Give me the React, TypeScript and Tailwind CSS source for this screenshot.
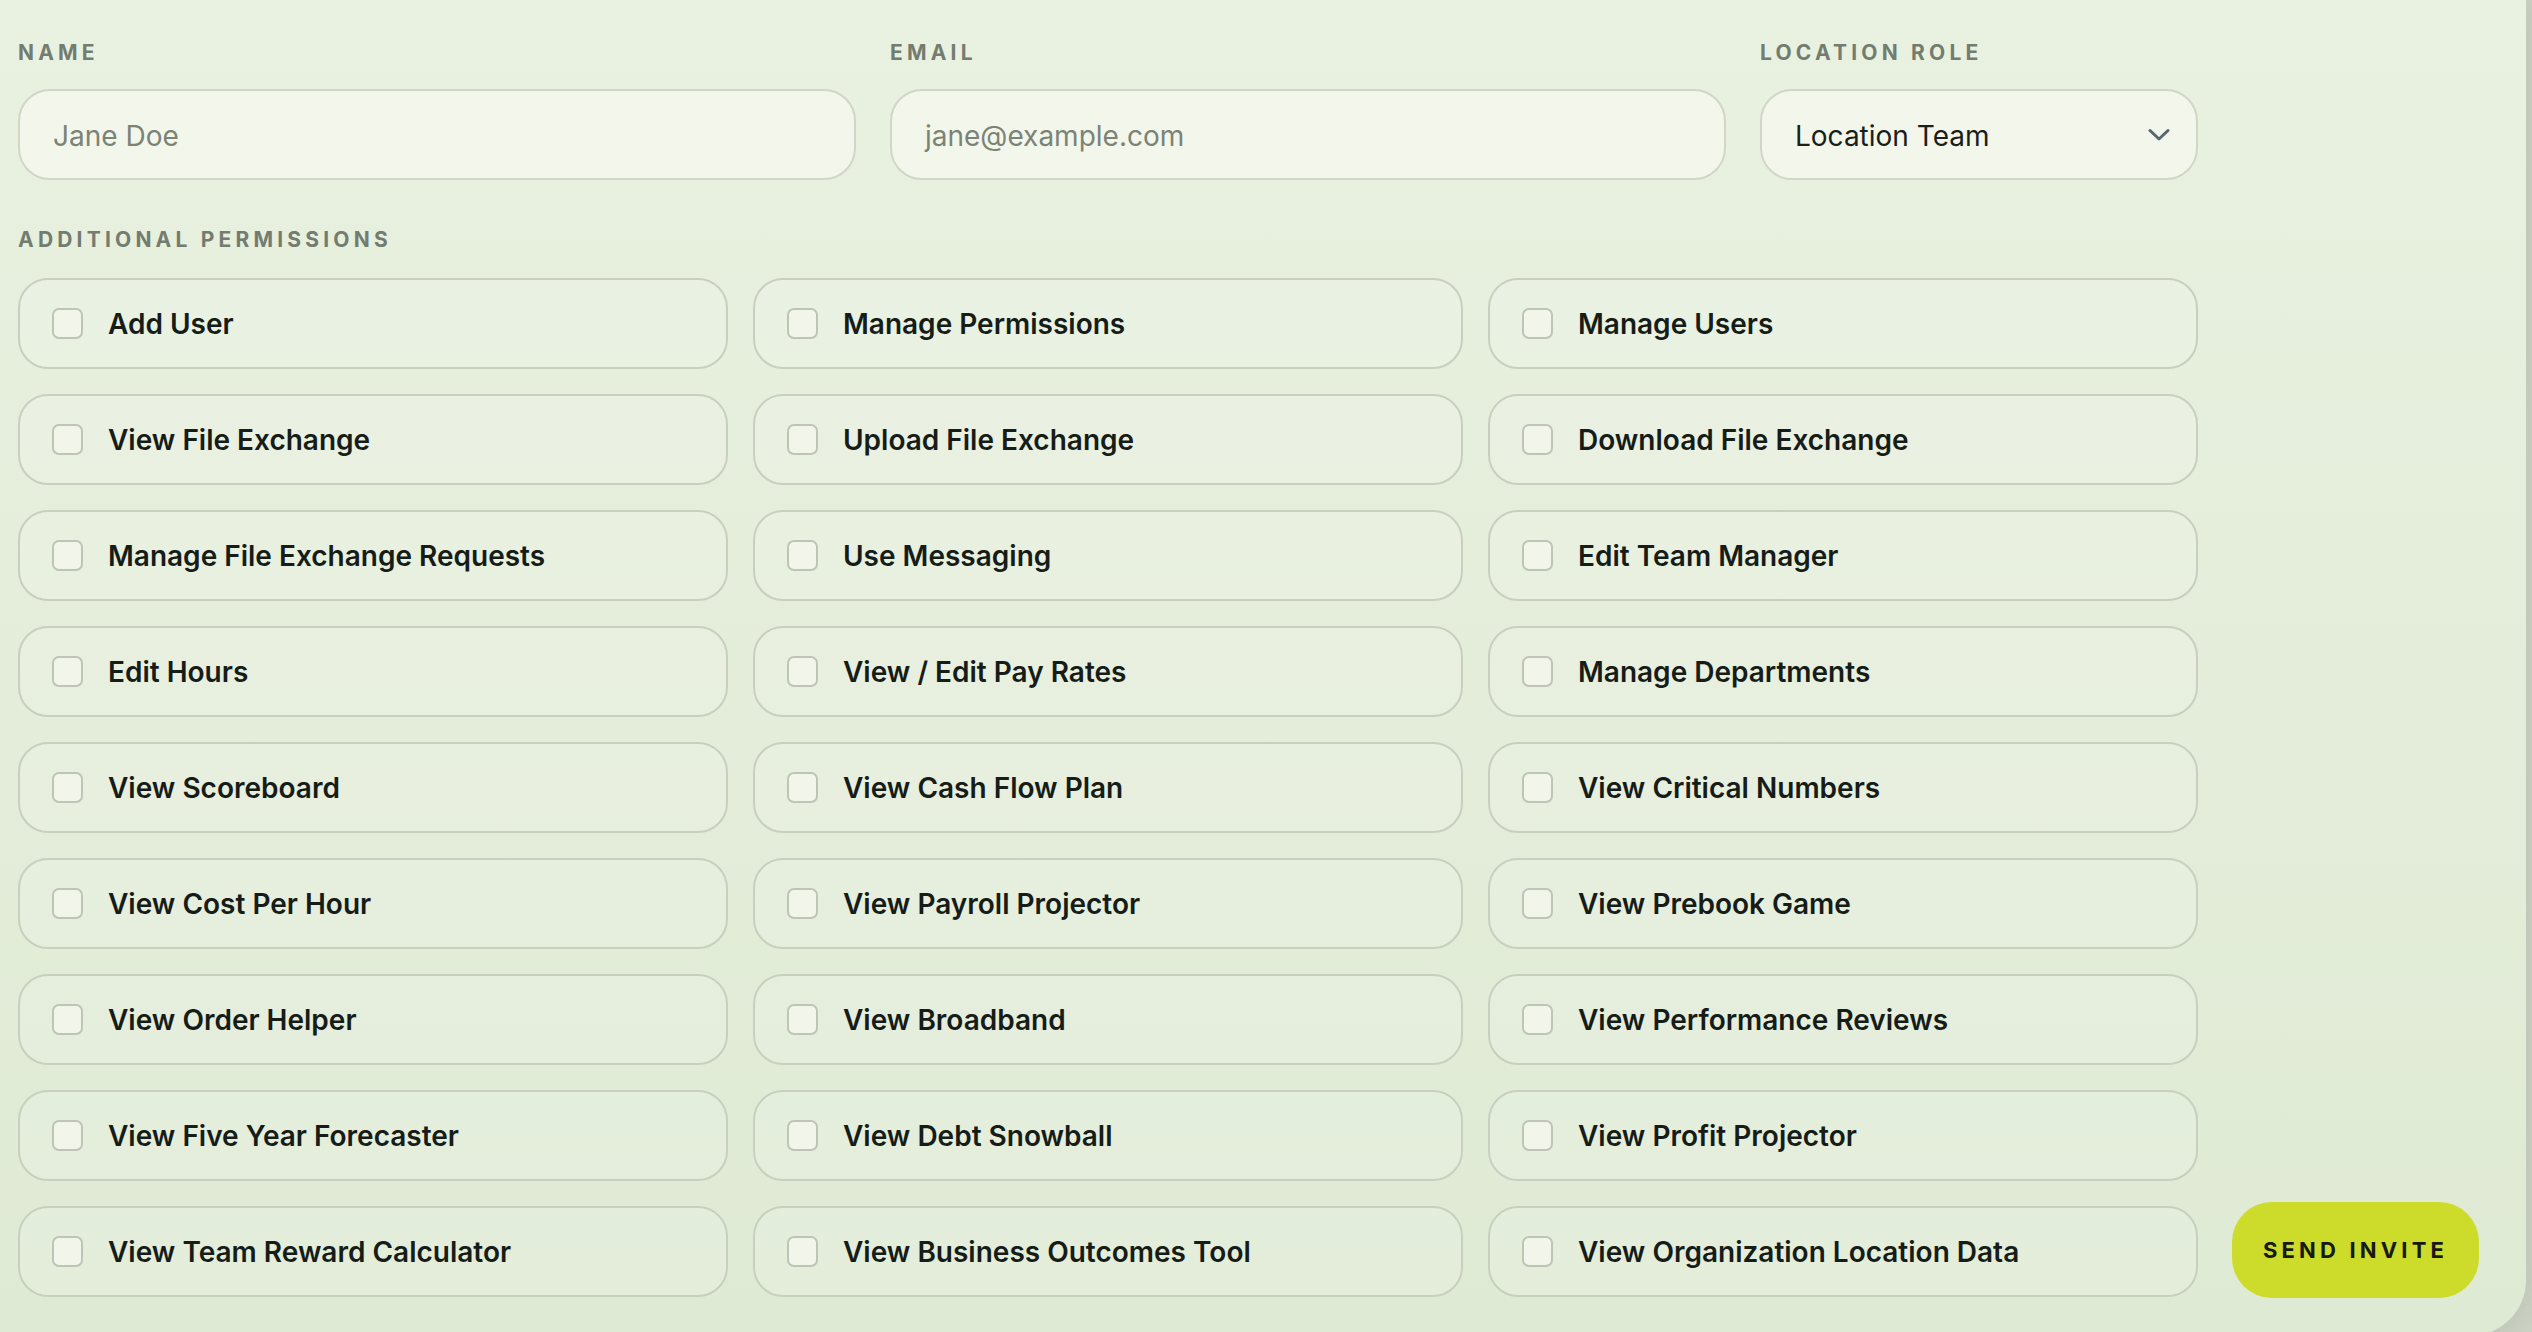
const permissions = [
  "Add User",
  "Manage Permissions",
  "Manage Users",
  "View File Exchange",
  "Upload File Exchange",
  "Download File Exchange",
  "Manage File Exchange Requests",
  "Use Messaging",
  "Edit Team Manager",
  "Edit Hours",
  "View / Edit Pay Rates",
  "Manage Departments",
  "View Scoreboard",
  "View Cash Flow Plan",
  "View Critical Numbers",
  "View Cost Per Hour",
  "View Payroll Projector",
  "View Prebook Game",
  "View Order Helper",
  "View Broadband",
  "View Performance Reviews",
  "View Five Year Forecaster",
  "View Debt Snowball",
  "View Profit Projector",
  "View Team Reward Calculator",
  "View Business Outcomes Tool",
  "View Organization Location Data",
];

function FieldLabel({ children }: { children: string }) {
  return (
    <p className="text-[21px] leading-6 font-bold uppercase tracking-[0.2em] text-[#737c70]">
      {children}
    </p>
  );
}

export default function App() {
  return (
    <div
      className="h-screen overflow-hidden bg-[#cbd2c4]"
      style={{ fontFamily: "Inter, 'Noto Sans', sans-serif" }}
    >
      <div className="w-[2526px] h-[1336px] rounded-br-[56px] bg-gradient-to-b from-[#e9f1e0] to-[#dfead4] shadow-[0_0_24px_rgba(60,70,50,0.12)] pl-[18px] pt-[41px] flex gap-[34px]">
        {/* Form */}
        <div className="w-[2180px] flex flex-col">
          <div className="grid grid-cols-[838px_836px_438px] gap-x-[34px]">
            <div className="flex flex-col gap-[24px]">
              <FieldLabel>Name</FieldLabel>
              <div className="h-[91px] rounded-[32px] border-2 border-[#d1d6c9] bg-[#f3f7eb] px-[33px] flex items-center">
                <span className="text-[28px] text-[#7b8377] pt-[2px]">Jane Doe</span>
              </div>
            </div>
            <div className="flex flex-col gap-[24px]">
              <FieldLabel>Email</FieldLabel>
              <div className="h-[91px] rounded-[32px] border-2 border-[#d1d6c9] bg-[#f3f7eb] px-[33px] flex items-center">
                <span className="text-[28px] text-[#7b8377] pt-[2px]">jane@example.com</span>
              </div>
            </div>
            <div className="flex flex-col gap-[24px]">
              <FieldLabel>Location Role</FieldLabel>
              <div className="h-[91px] rounded-[32px] border-2 border-[#d1d6c9] bg-[#f3f7eb] pl-[33px] pr-[26px] flex items-center justify-between">
                <span className="text-[28px] text-[#1a1f1a] pt-[2px]">Location Team</span>
                <svg width="22" height="14" viewBox="0 0 22 14" fill="none">
                  <path d="M2 2.5 L11 11 L20 2.5" stroke="#5b6472" strokeWidth="3" strokeLinecap="round" strokeLinejoin="round" />
                </svg>
              </div>
            </div>
          </div>

          <div className="mt-[48px]">
            <FieldLabel>Additional Permissions</FieldLabel>
          </div>

          {/* Permissions */}
          <div className="mt-[26px] grid grid-cols-3 gap-x-[25px] gap-y-[25px]">
            {permissions.map((p) => (
              <label
                key={p}
                className="h-[91px] rounded-[30px] border-2 border-[#c9cfbf] bg-white/15 pl-[32px] flex items-center gap-[25px]"
              >
                <span className="w-[31px] h-[31px] rounded-[7px] border-2 border-[#bec5b6] bg-[#f2f6ea] shrink-0" />
                <span className="text-[28px] font-semibold text-[#161c17]">{p}</span>
              </label>
            ))}
          </div>
        </div>

        {/* Action */}
        <div className="flex items-end pb-[38px]">
          <button className="w-[247px] h-[96px] rounded-[40px] bg-[#cddb2a] text-[22px] font-bold uppercase tracking-[0.19em] text-[#161a12]">
            Send Invite
          </button>
        </div>
      </div>
    </div>
  );
}
